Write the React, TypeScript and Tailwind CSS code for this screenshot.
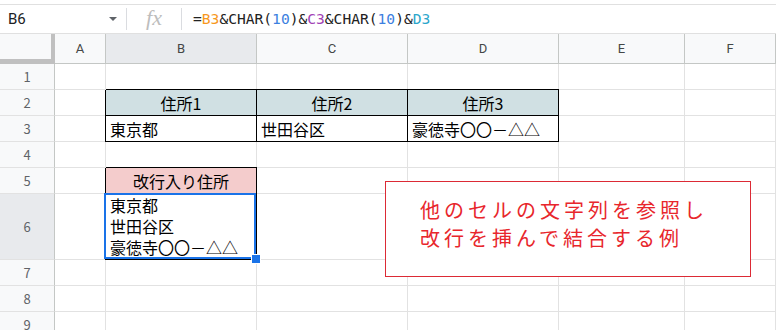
const cols = ["A", "B", "C", "D", "E", "F"];
const rowHeights = [26, 26, 26, 26, 26, 66, 26, 26, 26];

const cellFont = { fontFamily: '"Noto Sans CJK JP", "Liberation Sans", sans-serif' };

function Cell({
  children,
  className = "",
}: {
  children?: React.ReactNode;
  className?: string;
}) {
  return (
    <div className={`border-r border-b border-[#e2e2e2] flex items-center whitespace-nowrap text-[16px] text-black ${className}`}>
      {children}
    </div>
  );
}

// black bordered cell: right/bottom via border, top/left drawn over the neighbours
const boxed = "!border-black shadow-[0_-1px_0_#000,-1px_0_0_#000] relative";

export default function App() {
  const rows: React.ReactNode[] = [];

  for (let r = 1; r <= 9; r++) {
    rows.push(
      <div
        key={`h${r}`}
        className={`border-r border-[#c4c7c5] border-b border-b-[#e2e2e2] flex items-center justify-center text-[13px] text-[#5f6368] ${
          r === 6 ? "bg-[#e8eaed]" : "bg-[#f8f9fa]"
        }`}
      >
        {r}
      </div>
    );
    for (let c = 0; c < 6; c++) {
      const key = `${r}-${c}`;
      if (r === 2 && c >= 1 && c <= 3) {
        rows.push(
          <Cell key={key} className={`${boxed} bg-[#d0e0e3] justify-center`}>
            住所{c}
          </Cell>
        );
      } else if (r === 3 && c >= 1 && c <= 3) {
        const v = ["東京都", "世田谷区", "豪徳寺〇〇－△△"][c - 1];
        rows.push(
          <Cell key={key} className={`${boxed} pl-[4px]`}>
            {v}
          </Cell>
        );
      } else if (r === 5 && c === 1) {
        rows.push(
          <Cell key={key} className={`${boxed} bg-[#f4cccc] justify-center`}>
            改行入り住所
          </Cell>
        );
      } else if (r === 6 && c === 1) {
        rows.push(
          <Cell key={key} className={`${boxed} !items-start z-10`}>
            <div className="absolute -left-[2px] -top-[1px] right-0 bottom-0 border-2 border-[#1a73e8]" />
            <div className="pl-[4px] pt-[1px] leading-[21px] whitespace-pre">
              {"東京都\n世田谷区\n豪徳寺〇〇－△△"}
            </div>
            <div className="absolute -right-[4px] -bottom-[4px] w-[8px] h-[8px] bg-[#1a73e8] outline outline-1 outline-white" />
          </Cell>
        );
      } else {
        rows.push(<Cell key={key} />);
      }
    }
  }

  return (
    <div
      className="relative w-[776px] h-[330px] overflow-hidden bg-white"
      style={{ fontFamily: 'Roboto, "Liberation Sans", sans-serif' }}
    >
      {/* formula bar */}
      <div className="mt-[4px] h-[30px] border-t border-b border-[#e0e0e0] flex items-center">
        <div className="w-[126px] h-full flex items-center justify-between pl-[8px] pr-[9px] text-[15px] text-[#202124]">
          <span>B6</span>
          <span className="w-0 h-0 border-l-[4px] border-r-[4px] border-t-[4px] border-l-transparent border-r-transparent border-t-[#5f6368]" />
        </div>
        <div className="w-px h-[22px] bg-[#dadce0]" />
        <div className="w-[54px] flex justify-center">
          <span
            className="italic text-[22px] leading-none text-[#bdbdbd] -mt-[2px]"
            style={{ fontFamily: '"Liberation Serif", serif' }}
          >
            fx
          </span>
        </div>
        <div className="w-px h-[22px] bg-[#dadce0]" />
        <div
          className="pl-[11px] text-[14.6px] text-[#222]"
          style={{ fontFamily: '"DejaVu Sans Mono", monospace' }}
        >
          =<span className="text-[#f7981d]">B3</span>&amp;CHAR(<span className="text-[#3d7fe0]">10</span>)&amp;
          <span className="text-[#a142b5]">C3</span>&amp;CHAR(<span className="text-[#3d7fe0]">10</span>)&amp;
          <span className="text-[#2ba6cb]">D3</span>
        </div>
      </div>

      {/* column header */}
      <div className="grid grid-cols-[55px_51px_151px_151px_151px_126px_1fr] h-[30px]">
        <div className="bg-[#f8f9fa] border-r-[4px] border-b-[5px] border-[#c0c0c0]" />
        {cols.map((c) => (
          <div
            key={c}
            className={`border-r border-b border-[#c4c7c5] flex items-center justify-center text-[13px] text-[#444746] ${
              c === "B" ? "bg-[#e8eaed]" : "bg-[#f8f9fa]"
            }`}
          >
            {c}
          </div>
        ))}
      </div>

      {/* cells */}
      <div
        className="grid grid-cols-[55px_51px_151px_151px_151px_126px_1fr]"
        style={{ gridTemplateRows: rowHeights.map((h) => `${h}px`).join(" "), ...cellFont }}
      >
        {rows}
      </div>

      {/* text box drawn over the sheet */}
      <div
        className="absolute left-[385px] top-[181px] w-[366px] h-[96px] border border-[#dc2a35] bg-white pl-[34px] pt-[14px] text-[20px] leading-[28px] tracking-[4px] text-[#e8262c]"
        style={cellFont}
      >
        <div>他のセルの文字列を参照し</div>
        <div>改行を挿んで結合する例</div>
      </div>
    </div>
  );
}
